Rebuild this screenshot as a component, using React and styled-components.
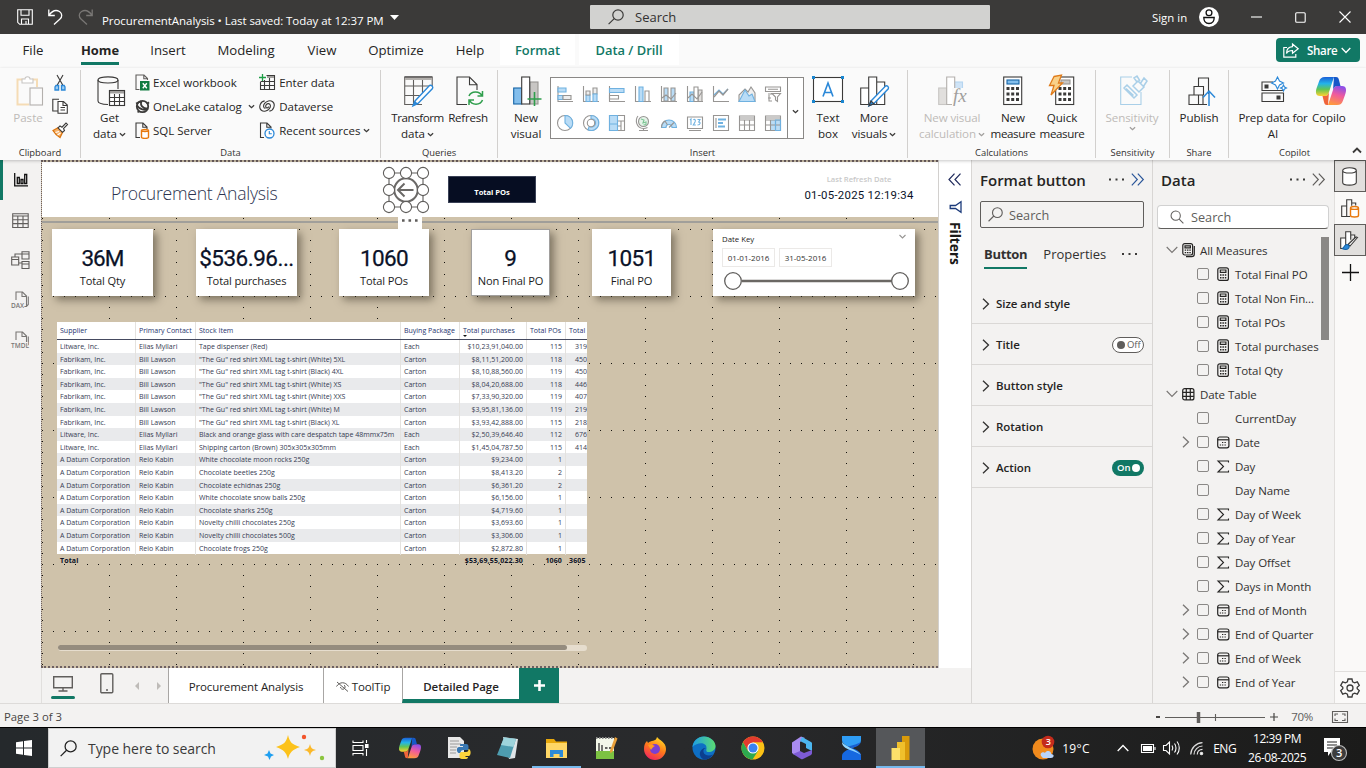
import React from 'react';
import styled, { createGlobalStyle, css } from 'styled-components';

const UI = '"Open Sans", "Noto Sans", sans-serif';
const DIN = 'Roboto, "Open Sans", sans-serif';
const teal = '#117865';

const Global = createGlobalStyle`
  * { box-sizing: border-box; }
  html, body { margin: 0; padding: 0; }
  body { font-family: ${UI}; background: #f3f2f1; color: #252423; overflow: hidden; }
  svg { display: block; flex: none; }
`;

const Window = styled.div`
  width: 1366px; height: 768px; display: flex; flex-direction: column; overflow: hidden;
`;

const Glyph = styled.svg.attrs({ fill: 'none' })`
  stroke: ${p => p.$c || '#3b3a39'};
  stroke-width: ${p => p.$sw || 1.1};
  overflow: visible;
`;
const Ico = ({ w = 16, h = w, c, sw, children, vb }) => (
  <Glyph width={w} height={h} viewBox={vb || `0 0 ${w} ${h}`} $c={c} $sw={sw}>{children}</Glyph>
);

/* ---------- title bar ---------- */
const TitleBar = styled.header`
  height: 34px; flex: none; background: #3b3a39; color: #fff; display: flex; align-items: center; padding-left: 17px;
`;
const QuickActions = styled.div`display: flex; gap: 15px; width: 85px; align-items: center;`;
const DocName = styled.div`
  font-size: 11.5px; width: 488px; display: flex; align-items: center; white-space: pre; padding-top: 6px;
  letter-spacing: -0.06px;
  svg { margin: -5px 0 0 6px; }
`;
const TopSearch = styled.div`
  width: 400px; height: 24px; background: #d2d2d0; color: #323130; display: flex; align-items: center; gap: 11px;
  padding-left: 18px; font-size: 13px; border-radius: 1px;
`;
const SignIn = styled.div`margin-left: 162px; font-size: 11.4px; width: 47px;`;
const WinButtons = styled.div`display: flex; gap: 33px; margin-left: 32px; align-items: center;`;

/* ---------- ribbon ---------- */
const TabStrip = styled.nav`
  height: 34px; flex: none; background: #fafafa; display: flex; align-items: stretch; position: relative; padding-left: 10px;
`;
const RibbonTab = styled.div`
  width: ${p => p.$w}px; margin-left: ${p => p.$ml || 0}px; font-size: 13.2px; display: flex; justify-content: center;
  align-items: center; white-space: nowrap; position: relative; padding-bottom: 2px;
  ${p => p.$context && css`background: #fff; color: ${teal}; font-weight: 600; font-size: 12.9px; height: 31px; padding-bottom: 0;`}
  ${p => p.$active && css`
    font-weight: 700; font-size: 12.9px;
    &::after { content: ''; position: absolute; left: 9px; right: 9px; bottom: 3px; height: 3px; background: ${teal}; }
  `}
`;
const ShareButton = styled.button`
  margin: 4px 6px 0 auto; width: 84px; height: 24px; border: 0; border-radius: 4px; background: ${teal}; color: #fff;
  font: 600 11.6px ${UI}; letter-spacing: -0.35px; display: flex; align-items: center; padding: 0 0 0 7px; gap: 8px;
  svg:last-child { margin-left: -4px; }
`;
const Ribbon = styled.div`
  height: 92px; flex: none; background: #fafafa; display: flex; padding-top: 2px; position: relative; z-index: 3;
  box-shadow: 0 1px 3px rgba(0,0,0,.22);
`;
const Group = styled.section`
  width: ${p => p.$w}px; height: 88px; border-right: 1px solid ${p => (p.$last ? 'transparent' : '#d2d0ce')};
  display: flex; flex-direction: column; flex: none;
`;
const GroupBody = styled.div`display: flex; flex: none; height: 76px; padding-left: ${p => p.$pl || 0}px;`;
const GroupLabel = styled.div`
  font-size: 9.4px; line-height: 14px; flex: none; text-align: center; color: #323130;
`;
const Big = styled.div`
  width: ${p => p.$w}px; margin-left: ${p => p.$ml || 0}px; flex: none; display: flex; flex-direction: column; align-items: center;
  font-size: 11.6px; line-height: 16px; white-space: nowrap; text-align: center; color: ${p => (p.$dim ? '#bebbb8' : '#252423')};
  ${p => p.$clip && 'overflow: hidden; align-items: flex-start;'}
`;
const BigIcon = styled.div`height: 40px; padding-top: 6px; padding-left: ${p => p.$shift || 0}px;`;
const Line = styled.div`display: flex; align-items: center; justify-content: center; gap: 2px; letter-spacing: ${p => p.$ls || 0}px;`;
const SmallCol = styled.div`width: ${p => p.$w}px; display: flex; flex-direction: column;`;
const Small = styled.div`
  height: 24px; display: flex; align-items: center; font-size: 11.5px; white-space: nowrap; gap: 3px;
  justify-content: ${p => (p.$center ? 'center' : 'flex-start')};
`;
const SmallIcon = styled.span`width: 16px; display: flex; justify-content: center; flex: none;`;
const Gallery = styled.div`
  width: 254px; height: 62px; margin-top: 7px; border: 1px solid #8a8886; background: #fff; display: flex;
`;
const GalleryGrid = styled.div`
  width: 236px; display: grid; grid-template-columns: repeat(9, 26px); grid-auto-rows: 29px; padding: 1px; align-content: start;
  > svg { margin: 7px 0 0 5px; }
`;
const GalleryMore = styled.div`flex: 1; border-left: 1px solid #8a8886; display: flex; align-items: center; justify-content: center; padding-top: 6px;`;
const Collapse = styled.div`position: absolute; right: 4px; bottom: 6px;`;

const Caret = ({ c = '#3b3a39', w = 7 }) => <Ico w={w} h={5} vb="0 0 7 5" c={c} sw={1.3}><path d="M.9 1.200l2.600 2.500L6.100 1.200" /></Ico>;

const IconSearch = ({ c = '#3b3a39', s = 15, flip }) => (
  <Ico w={s} vb="0 0 16 16" c={c} sw={1.2}>
    {flip ? <><circle cx="6.5" cy="6.5" r="5.3" /><path d="M10.5 10.5L15.3 15.3" /></> : <><circle cx="10" cy="6" r="5.2" /><path d="M6.2 9.6L.6 15.2" /></>}
  </Ico>
);
const IconPaste = () => (
  <Ico w={28} h={31} c="#c8c6c4"><path d="M8 3.5H1.5v25H13" stroke="#f5dcb5" strokeWidth="2" /><path d="M16 3.5h5V11" stroke="#f5dcb5" strokeWidth="2" /><path d="M6 7V3h3c0-3 5-3 5 0h3v4z" fill="#fff" /><rect x="14" y="12" width="12.5" height="17" fill="#fbfbfb" stroke="#b3b0ad" /></Ico>
);
const IconCut = () => <Ico w={12} h={17}><path d="M3 1l6 10.5M9 1L3 11.500" /><path d="M2 11.500h2.600V16H1v-3zM7.500 11.500h2.700l.8 1.500v3H7.500z" stroke="#2b88d8" fill="#9dcdf3" strokeWidth="1.3" /></Ico>;
const IconCopy = () => <Ico w={16} h={16}><path d="M6 13H.8V1.2H7" /><path d="M6 3.5h5.5L15.3 7v8.3H6zM11 3.8V7.5h4M8.5 9.5h4.5M8.5 12h4.5" fill="#fff" /></Ico>;
const IconBrush = () => <Ico w={16} h={16}><path d="M1 8.5l5-2.7 4.5 4.5L8 15.5C5.5 14 3 12 1 8.5z" fill="#f7b26a" stroke="#d9730d" strokeWidth="1.3" /><path d="M3.5 10.5l3.5-1M5.5 13l3-2" stroke="#fff" /><path d="M6 5.8L8 4l2 1.2L14 1l1.5 1.5L11.5 6.5 12.5 8.5l-2 1.8z" fill="#fff" /></Ico>;
const IconGetData = () => (
  <Ico w={28} h={30}><path d="M21 13V4c0-4.2-20-4.2-20 0v21c0 2 4 3.3 10 3.5" /><path d="M1 4c0 4 20 4 20 0" /><rect x="12.5" y="14.5" width="15" height="15" fill="#fff" /><path d="M12.5 16h15" stroke="#a19f9d" strokeWidth="3" /><path d="M12.5 21.5h15M12.5 25.5h15M17.5 18v12M22.5 18v12M12.5 14.5h15v15h-15z" /></Ico>
);
const IconExcel = () => <Ico w={15} h={17}><path d="M4.5 15.5H1V1h8l3.5 3.5V6M8.8 1v3.8h3.7" stroke="#605e5c" /><rect x="5" y="7" width="9.5" height="9.5" fill="#107c41" stroke="none" /><path d="M7.8 9.3l4 5M11.8 9.3l-4 5" stroke="#fff" strokeWidth="1.4" /></Ico>;
const IconOneLake = () => <Ico w={15} h={15} sw={1.8}><circle cx="7.5" cy="7.5" r="5.7" /><path d="M2 6.5c2.5 4 8 5.5 11 3M6.5 2c-1.7 4.2 1 7.5 6.4 7.6M1 4.5l5-2.3M12 5l2-1.7M4 12.5l-1.5.8" /></Ico>;
const IconSql = () => <Ico w={15} h={17}><path d="M5 15.5H1V1h7l4 4v2M7.8 1v4.2H12" /><path d="M6.5 8.5v6.8c0 1.4 7 1.4 7 0V8.5c0-1.4-7-1.4-7 0c0 1.3 7 1.3 7 0" fill="#fff" stroke="#e8780c" strokeWidth="1.4" /></Ico>;
const IconEnter = () => <Ico w={16} h={17}><path d="M7.5 1.5H15.5v14H1.5V8M1.5 7.5h14M1.5 11.5h14M5.5 6v9.5M10.5 4v11.5" /><path d="M8 3h7" stroke="#a19f9d" strokeWidth="2" /><path d="M3.5 0v7M0 3.5h7" stroke="#1e9e45" strokeWidth="1.3" /></Ico>;
const IconDataverse = () => <Ico w={16} h={14} vb="0 0 17 14" sw={1.2}><path d="M6 1.500C1.500 2-1 8.500 2.500 11.500c2.800 2.300 6.500.5 8.500-1.800 1.800-2 1.500-5-.8-5.200-2-.2-3.600 1.900-3 3.600.6 1.600 3 1 3-.7" /><path d="M11 12.500c4.500-.5 7-7 3.500-10-2.800-2.300-6.500-.5-8.500 1.800-1.800 2-1.500 5 .8 5.200" /></Ico>;
const IconRecent = () => <Ico w={16} h={17}><path d="M5 15.500H1.500V1h6.500l4 4v1.500M7.800 1v4.200H12" /><circle cx="10.500" cy="11.500" r="4.500" fill="#fff" stroke="#2b88d8" strokeWidth="1.300" /><path d="M10.300 9v2.700h2.500" stroke="#2b88d8" /></Ico>;
const IconTransform = () => <Ico w={30} h={31}><path d="M18 28.500H.7V1h27.500v9M.7 10h25M.7 19.500h17M9.500 4v24.500M18.500 4v13" stroke="#605e5c" /><path d="M1 2.500h27" stroke="#b3b0ad" strokeWidth="3" /><path d="M.7 1h27.500" /><path d="M11 25L25.500 9.500c2-1 4 1.300 3 3L14 27.500l-5 2.300z" fill="#fff" stroke="#2b88d8" strokeWidth="1.400" /><path d="M11 25l3 2.700-5 2z" fill="#2b88d8" stroke="none" /></Ico>;
const IconRefresh = () => <Ico w={28} h={31}><path d="M11 28.500H1V1h12.500l7.500 7.500V14M13.500 1v7.700H21" /><g stroke="#2f9e4c" strokeWidth="1.500"><path d="M13 20c2-5.500 11-5.500 13 0M26.500 15v5h-5M26.500 24c-2 5.500-11 5.500-13 0M13 29v-5h5" /></g></Ico>;
const IconNewVisual = () => <Ico w={29} h={31}><rect x="17" y="6" width="8" height="22" fill="#c8c6c4" stroke="#979593" /><rect x=".7" y="12" width="8" height="16" fill="#83beec" stroke="#1664a7" /><rect x="8.700" y="1" width="8" height="27" fill="#fff" /><path d="M21.500 16v14M14.500 23h14" stroke="#2f9e4c" strokeWidth="1.600" /></Ico>;
const IconTextBox = () => <Ico w={32} h={28}><rect x="1.500" y="1.500" width="29" height="24" fill="#fff" /><path d="M11 20.500L16 7l5 13.500M12.700 16.500h6.600" stroke="#2b88d8" strokeWidth="1.600" /><path d="M0 0h3v3H0zM29 0h3v3h-3zM0 24h3v3H0zM29 24h3v3h-3z" fill="#1a86d0" stroke="none" /></Ico>;
const IconMoreVisuals = () => <Ico w={30} h={31}><path d="M.7 12h8v16.500h-8zM8.700 1h8v27.500h-8zM16.700 6h8v22.500h-8z" fill="#fff" /><path d="M11 25L25.500 10c2-.7 3.600 1 2.800 2.800L14 27.500l-5 2.300z" fill="#fff" stroke="#2b88d8" strokeWidth="1.400" /><path d="M11 25l3 2.700-5 2z" fill="#2b88d8" /></Ico>;
const FxText = styled.text`font: italic 19px "Liberation Serif", serif; fill: #a19f9d; stroke: none;`;
const IconFx = () => <Ico w={28} h={31} c="#b3b0ad"><rect x=".7" y="12" width="8" height="16.500" fill="#e1dfdd" stroke="#c8c6c4" /><rect x="16.500" y="6" width="8" height="8" fill="#cfe4f7" stroke="#b5d5f0" /><path d="M8.700 1h8v27.500h-8z" fill="#fff" /><path d="M14 12h15v19H14z" fill="#fafafa" stroke="none" /><FxText x="15" y="26">fx</FxText></Ico>;
const CalcBody = ({ dx = 0 }) => <g transform={`translate(${dx} 0)`}><rect x=".7" y="1" width="18" height="27.500" fill="#fff" /><path d="M3.500 12.500h3M8.200 12.500h3M13 12.500h3M3.500 18h3M8.200 18h3M13 18h3M3.500 23.500h3M8.200 23.500h3M13 23.500h3" strokeWidth="3" /></g>;
const IconCalc = () => <Ico w={20} h={31}><CalcBody /><rect x="4" y="4" width="12" height="4" fill="#83beec" stroke="#1664a7" /></Ico>;
const IconQuick = () => <Ico w={26} h={31}><CalcBody dx={6} /><rect x="12" y="4" width="9" height="4" fill="#c8c6c4" stroke="#979593" /><path d="M5 .5L12.500-1 9.500 7h4L2 19l3-9.500H.5z" fill="#f9d189" stroke="#e07b1a" strokeWidth="1.300" /></Ico>;
const IconSens = () => <Ico w={28} h={31} c="#a9cfe8"><path d="M21 16v12.500H.7V1H12" /><path d="M4 12l3-3 10 10-3 3zM6 12.500l7.500 7M13 10l5-5 6 6-5 5zM17 6l-3-4 3-2 3 5M20 8l4-6 3 3-4 6" strokeWidth="1.500" /></Ico>;
const IconPublish = () => <Ico w={28} h={31}><path d="M1 19h9.500v9.500H1zM6 19v-8.500h9.500V19M10.500 10.500V2h10v16M10.500 28.500H15V19h-4.500M15 28.500h4" /><path d="M21 30V15.500M15 21.500l6-6.500 6 6.500" stroke="#2b88d8" strokeWidth="1.500" /></Ico>;
const IconPrep = () => <Ico w={26} h={27}><path d="M12 6H1v8.500h21.500M1 17h21.500v8.500H1zM1 6h10" /><path d="M3.500 8.500h4v4h-4zM15.500 19.500h4v4h-4z" fill="#3b3a39" stroke="none" /><path d="M16.500 1l2 4 4 2-4 2-2 4-2-4-4-2 4-2zM22.500 9l1 2 2 1-2 1-1 2-1-2-2-1 2-1z" stroke="#2b88d8" fill="#fff" /></Ico>;
const IconCopilot = ({ s = 30, id = 'cp' }) => (
  <Ico w={s} vb="0 0 30 30" c="none">
    <defs>
      <linearGradient id={id + 'a'} x1="0" y1="0" x2="0" y2="1"><stop offset="0" stopColor="#1b5fd8" /><stop offset=".35" stopColor="#23b4ea" /><stop offset=".65" stopColor="#62c554" /><stop offset="1" stopColor="#ffd02f" /></linearGradient>
      <linearGradient id={id + 'b'} x1=".6" y1="0" x2=".3" y2="1"><stop offset="0" stopColor="#8d4fe8" /><stop offset=".45" stopColor="#f05a9d" /><stop offset="1" stopColor="#ff9a3d" /></linearGradient>
    </defs>
    <path d="M21 10h5c5 0 4.500 5 3 9l-2 5.500c-1 3-2.500 4.500-6 4.500H12l5-15c1-3 2-4 4-4z" fill={`url(#${id}b)`} />
    <path d="M9 20H4c-5 0-4.500-5-3-9L3 5.500C4 2.500 5.500 1 9 1h9l-5 15c-1 3-2 4-4 4z" fill={`url(#${id}a)`} />
    <path d="M9 1h11c2 0 2.500 1 3 3l1.500 6H21c-2 0-3 1-4 4L18 1z" fill="#1658c8" />
    <path d="M21 29H11c-2 0-2.500-1-3-3l-1.500-6H9c2 0 3-1 4-4l-1 13z" fill="#f0643a" />
  </Ico>
);

const gs = '#979593';
const blue = '#b9dcf6';
const galleryIcons = [
  <Ico key="a" c={gs}><path d="M1 0v15.500h15" /><path d="M1 2h8v4H1z" fill={blue} stroke="#6fb1e0" /><path d="M1 9.500h5v4H1z" fill={blue} stroke="#6fb1e0" /><path d="M6 9.500h8v4H6z" fill="#eee" /></Ico>,
  <Ico key="b" c={gs}><path d="M.5 0v15.500H16" /><path d="M3 9h4v6.500H3z" fill={blue} stroke="#6fb1e0" /><path d="M3 5h4v4H3zM10 2h4v6h-4z" fill="#eee" /><path d="M10 8h4v7.500h-4z" fill={blue} stroke="#6fb1e0" /></Ico>,
  <Ico key="c" c={gs}><path d="M.5 0v15.500H16" /><path d="M.5 2.500h14.500v4H.5z" fill={blue} stroke="#6fb1e0" /><path d="M.5 9.500h9v3.500h-9z" /></Ico>,
  <Ico key="d" c={gs}><path d="M.5 0v15.500H16" /><path d="M4 1h4v14.500H4z" fill={blue} stroke="#6fb1e0" /><path d="M10 5h4v10.500h-4z" /></Ico>,
  <Ico key="e" c={gs}><path d="M.5 0v15.500H16" /><path d="M3 2h4v13H3zM10 2h4v13h-4z" fill={blue} /><path d="M1 12l4-3 5 4 5-6" /></Ico>,
  <Ico key="f" c={gs}><path d="M.5 0v15.500H16" /><path d="M3 6h4v9.500H3z" fill={blue} stroke="#6fb1e0" /><path d="M11 4h4v11.500h-4z" fill="#e3e1df" /><path d="M7 1h4v14.500H7z" fill="#fff" /><path d="M1 12l4-4 5 5 5-7" /></Ico>,
  <Ico key="g" c={gs}><path d="M.5 0v15.500H16" /><path d="M1 9l5-5 4 4 5-5" stroke="#6fb1e0" /><path d="M1 11l5-6 4 4 5-6" strokeWidth="1.300" /></Ico>,
  <Ico key="h" c={gs}><path d="M0 15.500V9L6 3l3 3 3-5 4 6v8.500z" fill="#eee" /><path d="M0 15.500L6 4l4 6 3-2 3 7.500z" fill={blue} stroke="#6fb1e0" /></Ico>,
  <Ico key="i" c={gs}><path d="M7 15H4V9M.5 1h15v4.500H.5zM3 3.300h10M3 8h5M3 12h3M7 7.500h8.500L12.500 11v4.500l-2-1.500v-3z" fill="none" /></Ico>,
  <Ico key="j" c={gs}><circle cx="8" cy="8" r="7.500" /><path d="M8 .5a7.500 7.500 0 0 1 5.500 12.800L8 8z" fill={blue} stroke="#6fb1e0" /></Ico>,
  <Ico key="k" c={gs}><circle cx="8" cy="8" r="7.500" /><path d="M8 .5a7.500 7.500 0 1 1-3 14.200l1.300-3.500A4 4 0 1 0 8 4z" fill={blue} stroke="#6fb1e0" /><circle cx="8" cy="8" r="3.700" fill="#fff" /></Ico>,
  <Ico key="l" c={gs}><path d="M.5.5h15v15H.5zM9 6h6.500M12 6v9.500M9 11h3" /><path d="M.5.5h8v15h-8zM.5 9h8" fill={blue} stroke="#6fb1e0" /></Ico>,
  <Ico key="m" c={gs}><circle cx="8.500" cy="6.500" r="5" fill="#e4f3e8" /><path d="M6 4l3 1-1 3 3-1v2.500l-2.500.5" stroke="#7cc594" /><path d="M3 1C0 5 1 13 8.500 13.500c2 0 3-.5 4-1M8.500 13.500V15.500M4 15.500h9" /></Ico>,
  <Ico key="n" c={gs}><path d="M.5 12.500a7.500 7.500 0 0 1 15 0h-4.500a3 3 0 0 0-6 0z" fill={blue} stroke="#6fb1e0" /><path d="M.5 12.500A7.500 7.500 0 0 1 4 6l2.500 4M8 12.500l5-5" /></Ico>,
  <Ico key="o" c={gs}><path d="M.5 2h15v11.500H.5zM2 15.500h12" /><path d="M3 5l1-1v6M6.500 5c1-1.500 2.500 0 1.500 2l-1.700 3h2.500M10.500 4.500h2.500L11.700 7c2 0 2 3-1.200 3" stroke="#6fb1e0" /></Ico>,
  <Ico key="p" c={gs}><path d="M.5.5h15v15H.5zM3 3v10" /><path d="M5 4.500h8M5 8h5M5 11.500h7" stroke="#6fb1e0" strokeWidth="1.800" /></Ico>,
  <Ico key="q" c={gs}><path d="M.5 1h15v14.500H.5zM.5 5h15M.5 10h15M5.500 5v10.500M10.500 5v10.500M.5 3h15" /></Ico>,
  <Ico key="r" c={gs}><path d="M6 5h9.500v10.500H6z" fill={blue} stroke="none" /><path d="M.5 1h15v14.500H.5zM.5 5h15M.5 10h15M5.500 5v10.500M10.500 5v10.500M.5 3h15" /><path d="M10.500 5v10.500h5V5z" stroke="#6fb1e0" /></Ico>,
];

function RibbonBar() {
  return (
    <Ribbon>
      <Group $w={81}>
        <GroupBody $pl={6}>
          <Big $w={44} $dim><BigIcon $shift={4}><IconPaste /></BigIcon><Line>Paste</Line></Big>
          <SmallCol $w={20}>
            <Small $center><IconCut /></Small>
            <Small $center><IconCopy /></Small>
            <Small $center><IconBrush /></Small>
          </SmallCol>
        </GroupBody>
        <GroupLabel>Clipboard</GroupLabel>
      </Group>
      <Group $w={300}>
        <GroupBody $pl={4}>
          <Big $w={49}><BigIcon $shift={3}><IconGetData /></BigIcon><Line>Get</Line><Line>data <Caret /></Line></Big>
          <SmallCol $w={125}>
            <Small><SmallIcon><IconExcel /></SmallIcon>Excel workbook</Small>
            <Small><SmallIcon><IconOneLake /></SmallIcon>OneLake catalog&nbsp;<Caret /></Small>
            <Small><SmallIcon><IconSql /></SmallIcon>SQL Server</Small>
          </SmallCol>
          <SmallCol $w={118}>
            <Small><SmallIcon><IconEnter /></SmallIcon>&#8202;Enter data</Small>
            <Small><SmallIcon><IconDataverse /></SmallIcon>&#8202;Dataverse</Small>
            <Small><SmallIcon><IconRecent /></SmallIcon>&#8202;Recent sources <Caret /></Small>
          </SmallCol>
        </GroupBody>
        <GroupLabel>Data</GroupLabel>
      </Group>
      <Group $w={117}>
        <GroupBody $pl={9}>
          <Big $w={55}><BigIcon $shift={2}><IconTransform /></BigIcon><Line $ls={-0.45}>Transform</Line><Line>data<Caret /></Line></Big>
          <Big $w={46}><BigIcon $shift={4}><IconRefresh /></BigIcon><Line $ls={-0.25}>Refresh</Line></Big>
        </GroupBody>
        <GroupLabel>Queries</GroupLabel>
      </Group>
      <Group $w={410}>
        <GroupBody $pl={4}>
          <Big $w={48}><BigIcon $shift={2}><IconNewVisual /></BigIcon><Line>New</Line><Line>visual</Line></Big>
          <Gallery>
            <GalleryGrid>{galleryIcons}</GalleryGrid>
            <GalleryMore><Caret /></GalleryMore>
          </Gallery>
          <Big $w={48}><BigIcon><IconTextBox /></BigIcon><Line>Text</Line><Line>box</Line></Big>
          <Big $w={42} $ml={1}><BigIcon $shift={2}><IconMoreVisuals /></BigIcon><Line>More</Line><Line $ls={-0.1}>visuals<Caret /></Line></Big>
        </GroupBody>
        <GroupLabel>Insert</GroupLabel>
      </Group>
      <Group $w={188}>
        <GroupBody $pl={9}>
          <Big $w={70} $dim><BigIcon><IconFx /></BigIcon><Line $ls={-0.15}>New visual</Line><Line $ls={-0.1}>calculation <Caret c="#a19f9d" /></Line></Big>
          <Big $w={48} $ml={2}><BigIcon><IconCalc /></BigIcon><Line>New</Line><Line $ls={-0.4}>measure</Line></Big>
          <Big $w={48} $ml={1}><BigIcon><IconQuick /></BigIcon><Line>Quick</Line><Line $ls={-0.4}>measure</Line></Big>
        </GroupBody>
        <GroupLabel>Calculations</GroupLabel>
      </Group>
      <Group $w={74}>
        <GroupBody>
          <Big $w={72} $dim><BigIcon $shift={3}><IconSens /></BigIcon><Line $ls={-0.1}>Sensitivity</Line><Line><Caret c="#a19f9d" /></Line></Big>
        </GroupBody>
        <GroupLabel>Sensitivity</GroupLabel>
      </Group>
      <Group $w={59}>
        <GroupBody>
          <Big $w={58}><BigIcon $shift={5}><IconPublish /></BigIcon><Line $ls={-0.1}>Publish</Line></Big>
        </GroupBody>
        <GroupLabel>Share</GroupLabel>
      </Group>
      <Group $w={132} $last>
        <GroupBody $pl={8}>
          <Big $w={72}><BigIcon $shift={2}><IconPrep /></BigIcon><Line $ls={-0.15}>Prep data for</Line><Line>AI</Line></Big>
          <Big $w={36} $ml={3} $clip><BigIcon $shift={4}><IconCopilot /></BigIcon><Line $ls={-0.1}>Copilo</Line></Big>
        </GroupBody>
        <GroupLabel>Copilot</GroupLabel>
      </Group>
      <Collapse><Ico w={10} h={7} sw={1.800}><path d="M1 5.500L5 1.500l4 4" /></Ico></Collapse>
    </Ribbon>
  );
}

/* ---------- workspace ---------- */
const Workspace = styled.main`height: 543px; flex: none; display: flex;`;
const LeftRail = styled.aside`width: 41px; background: #f3f2f1; display: flex; flex-direction: column; flex: none;`;
const RailItem = styled.div`
  height: 40px; display: flex; align-items: center; justify-content: center;
  box-shadow: inset 3px 0 0 ${p => (p.$active ? teal : 'transparent')};
`;
const Middle = styled.div`width: 930px; display: flex; flex-direction: column; flex: none;`;
const ReportRow = styled.div`height: 508px; display: flex;`;
const Canvas = styled.div`
  width: 897px; height: 508px; background: #cfc2aa; position: relative; overflow: hidden; flex: none;
  &::after { content: ''; position: absolute; inset: 0; border: 2px dotted #6d6062; border-left-width: 1px; border-right: 0; pointer-events: none; }
`;
const GridDots = styled.svg`position: absolute; inset: 0;`;
const Layer = styled.div`position: relative; padding: 2px 0 0 1px;`;
const Banner = styled.div`height: 55px; background: #fff; display: flex; padding-left: 69px;`;
const ReportTitle = styled.h1`
  margin: 0; padding-top: 17px; width: 272px; font-size: 17.600px; line-height: 28px; font-weight: 300; color: #2b3350; letter-spacing: -0.25px; white-space: nowrap;
`;
const BackButton = styled.div`width: 65px; padding-top: 5px; position: relative;`;
const MoreBadge = styled.div`
  position: absolute; left: 15px; top: 55px; width: 24px; height: 12px; background: #fff; z-index: 2; padding: 2px 0 0 4px;
`;
const NavyButton = styled.div`
  width: 88px; height: 27px; margin-top: 14px; background: #060d22; border: 1px solid #3a4156; color: #fff; font-size: 7.600px; font-weight: 700;
  display: flex; align-items: center; justify-content: center; padding-top: 4px; letter-spacing: -0.050px;
`;
const Refreshed = styled.div`margin-left: auto; margin-right: 23px; width: 112px; padding-top: 12px; text-align: center;`;
const RefreshedLabel = styled.div`font-size: 7.600px; line-height: 11px; font-weight: 600; color: #c9c9c9;`;
const RefreshedValue = styled.div`font: 400 11.400px/20px ${DIN}; color: #0b1228; letter-spacing: 0.260px; white-space: nowrap;`;
const Rule = styled.div`height: 2px; background: #a19f9a; margin-top: 4px;`;
const Cards = styled.div`display: flex; padding: 6px 0 0 10px;`;
const shadow = '4px 4px 8px rgba(60, 52, 40, .55)';
const KpiCard = styled.div`
  width: ${p => p.$w}px; margin-right: ${p => p.$gap}px; height: 67px; background: #fff; box-shadow: ${shadow}; text-align: center; flex: none;
  padding-top: 16px; border: 1px solid ${p => (p.$outline ? '#a19f9d' : '#fff')};
`;
const KpiValue = styled.div`font: 400 22.500px/24px ${DIN}; color: #0b1228; -webkit-text-stroke: 0.25px #0b1228; letter-spacing: ${p => p.$ls}px; white-space: nowrap;`;
const KpiLabel = styled.div`font-size: 11.100px; line-height: 16px; margin-top: 3px; color: #1c1c1c; white-space: nowrap; letter-spacing: -0.140px;`;
const Slicer = styled.div`width: 202px; height: 67px; background: #fff; box-shadow: ${shadow}; padding: 4px 9px 0;`;
const SlicerHead = styled.div`display: flex; justify-content: space-between; font-size: 7.800px; line-height: 12px; height: 15px;`;
const DateBoxes = styled.div`display: flex; gap: 4px;`;
const DateBox = styled.div`width: 53px; height: 19px; border: 1px solid #ebe9e7; font-size: 8px; line-height: 17px; text-align: center; color: #333;`;
const SliderSvg = styled.svg`margin: 4px 0 0 1px;`;

const TableBox = styled.div`width: 530px; margin: 26px 0 0 15px; overflow: hidden;`;
const cols = '78px 60px 205px 59px 67px 39px 62px';
const Row = styled.div`
  display: grid; grid-template-columns: ${cols}; height: ${p => p.$h || 12.6}px; width: 570px;
  background: ${p => p.$bg || 'transparent'}; font-size: 7.020px; line-height: 13px; color: ${p => p.$c || '#363b52'};
  font-weight: ${p => (p.$bold ? 700 : 400)};
`;
const HeadRow = styled(Row)`
  height: 18px; border-bottom: 1px solid #454a60; line-height: 16px; background: #fff; color: #25336e; position: relative;
`;
const Cell = styled.div`
  padding: 0 3px 0 ${p => p.$pl || 3}px; white-space: nowrap; text-align: ${p => (p.$r ? 'right' : 'left')}; letter-spacing: ${p => p.$ls || 0}px;
  border-left: ${p => (p.$line ? '1px solid #e4e2df' : '0')};
`;
const SortMark = styled.div`
  position: absolute; left: 406px; top: 13px; border: 2.500px solid transparent; border-top-color: #111;
`;
const HScroll = styled.div`
  width: 529px; height: 6px; margin: 77px 0 0 16px; border-radius: 3px; background: #e6ddce;
  &::before { content: ''; display: block; width: 509px; height: 5px; border-radius: 3px; background: #958c7e; }
`;

const L = 'Litware, Inc.', F = 'Fabrikam, Inc.', A = 'A Datum Corporation';
const E = 'Elias Myllari', B = 'Bill Lawson', R = 'Reio Kabin';
const data = [
  [L, E, 'Tape dispenser (Red)', 'Each', '$10,23,91,040.00', '115', '319'],
  [F, B, '"The Gu" red shirt XML tag t-shirt (White) 5XL', 'Carton', '$8,11,51,200.00', '118', '450'],
  [F, B, '"The Gu" red shirt XML tag t-shirt (Black) 4XL', 'Carton', '$8,10,88,560.00', '119', '450'],
  [F, B, '"The Gu" red shirt XML tag t-shirt (White) XS', 'Carton', '$8,04,20,688.00', '118', '446'],
  [F, B, '"The Gu" red shirt XML tag t-shirt (White) XXS', 'Carton', '$7,33,90,320.00', '119', '407'],
  [F, B, '"The Gu" red shirt XML tag t-shirt (White) M', 'Carton', '$3,95,81,136.00', '119', '219'],
  [F, B, '"The Gu" red shirt XML tag t-shirt (Black) XL', 'Carton', '$3,93,42,888.00', '115', '218'],
  [L, E, 'Black and orange glass with care despatch tape 48mmx75m', 'Each', '$2,50,39,646.40', '112', '676'],
  [L, E, 'Shipping carton (Brown) 305x305x305mm', 'Each', '$1,45,04,787.50', '115', '414'],
  [A, R, 'White chocolate moon rocks 250g', 'Carton', '$9,234.00', '1', ''],
  [A, R, 'Chocolate beetles 250g', 'Carton', '$8,413.20', '2', ''],
  [A, R, 'Chocolate echidnas 250g', 'Carton', '$6,361.20', '2', ''],
  [A, R, 'White chocolate snow balls 250g', 'Carton', '$6,156.00', '1', ''],
  [A, R, 'Chocolate sharks 250g', 'Carton', '$4,719.60', '1', ''],
  [A, R, 'Novelty chilli chocolates 250g', 'Carton', '$3,693.60', '1', ''],
  [A, R, 'Novelty chilli chocolates 500g', 'Carton', '$3,306.00', '1', ''],
  [A, R, 'Chocolate frogs 250g', 'Carton', '$2,872.80', '1', ''],
];
const heads = ['Supplier', 'Primary Contact', 'Stock Item', 'Buying Package', 'Total purchases', 'Total POs', 'Total'];

const offsets = [0, 11, 22, 33, 45, 56];
const handlePts = [[6, 6], [23, 6], [40, 6], [6, 23], [40, 23], [6, 40], [23, 40], [40, 40]];

function Report() {
  return (
    <Canvas>
      <GridDots width="897" height="508">
        <defs>
          <pattern id="dots" width="67" height="67" x="1" y="2" patternUnits="userSpaceOnUse">
            {offsets.map(o => <rect key={'v' + o} x="0" y={o} width="1" height="1" fill="#14120e" />)}
            {offsets.slice(1).map(o => <rect key={'h' + o} x={o} y="0" width="1" height="1" fill="#14120e" />)}
          </pattern>
        </defs>
        <rect width="897" height="508" fill="url(#dots)" />
      </GridDots>
      <Layer>
        <Banner>
          <ReportTitle>Procurement Analysis</ReportTitle>
          <BackButton>
            <Ico w={46} c="#605e5c">
              <path d="M6 6h34v34H6z" />
              <circle cx="23" cy="23" r="11.700" fill="#fff" stroke="#6b6967" strokeWidth="2" />
              <path d="M30.500 23H15.500M21.500 16.500L15 23l6.500 6.500" stroke="#6b6967" strokeWidth="2" />
              {handlePts.map(([x, y]) => <circle key={`${x}-${y}`} cx={x} cy={y} r="5.600" fill="#fff" />)}
            </Ico>
            <MoreBadge><Ico w={16} h={3} c="none"><path d="M0 .2h2.600v2.600H0zM6.500.2h2.600v2.600H6.500zM13 .2h2.600v2.600H13z" fill="#605e5c" /></Ico></MoreBadge>
          </BackButton>
          <NavyButton>Total POs</NavyButton>
          <Refreshed>
            <RefreshedLabel>Last Refresh Date</RefreshedLabel>
            <RefreshedValue>01-05-2025 12:19:34</RefreshedValue>
          </Refreshed>
        </Banner>
        <Rule />
        <Cards>
          <KpiCard $w={101} $gap={43}><KpiValue $ls={-0.9}>36M</KpiValue><KpiLabel>Total Qty</KpiLabel></KpiCard>
          <KpiCard $w={101} $gap={42}><KpiValue $ls={-0.5}>$536.96...</KpiValue><KpiLabel>Total purchases</KpiLabel></KpiCard>
          <KpiCard $w={90} $gap={42}><KpiValue $ls={-0.7}>1060</KpiValue><KpiLabel>Total POs</KpiLabel></KpiCard>
          <KpiCard $w={79} $gap={42} $outline><KpiValue $ls={0}>9</KpiValue><KpiLabel>Non Final PO</KpiLabel></KpiCard>
          <KpiCard $w={79} $gap={42}><KpiValue $ls={-0.7}>1051</KpiValue><KpiLabel>Final PO</KpiLabel></KpiCard>
          <Slicer>
            <SlicerHead>Date Key<Ico w={7} h={8} c="#979593"><path d="M.5 2l3 3 3-3" /></Ico></SlicerHead>
            <DateBoxes><DateBox>01-01-2016</DateBox><DateBox>31-05-2016</DateBox></DateBoxes>
            <SliderSvg width="186" height="20">
              <path d="M19 10h150" stroke="#6b6864" strokeWidth="2.500" />
              <circle cx="10" cy="10" r="8.300" fill="#fff" stroke="#605e5c" strokeWidth="1.300" />
              <circle cx="177" cy="10" r="8.300" fill="#fff" stroke="#605e5c" strokeWidth="1.300" />
            </SliderSvg>
          </Slicer>
        </Cards>
        <TableBox>
          <HeadRow>
            {heads.map((h, i) => <Cell key={h + i} $line={i > 0}>{h}</Cell>)}
            <SortMark />
          </HeadRow>
          {data.map((r, n) => (
            <Row key={n} $bg={n % 2 ? '#e9eaec' : '#fff'}>
              {r.map((v, i) => <Cell key={i} $line={i > 0} $r={i === 4 || i === 5} $pl={i === 6 ? 9 : 3}>{v}</Cell>)}
            </Row>
          ))}
          <Row $bold $c="#0d1226" $h={14}>
            {['Total', '', '', '', '$53,69,55,022.30', '1060', '3605'].map((v, i) => <Cell key={i} $r={i === 4 || i === 5} $pl={i === 6 ? 4 : 3} $ls={0.13}>{v}</Cell>)}
          </Row>
        </TableBox>
        <HScroll />
      </Layer>
    </Canvas>
  );
}

const FiltersPane = styled.div`
  width: 33px; background: #fff; border-left: 1px solid #d2d0ce; display: flex; flex-direction: column; align-items: center; padding-top: 13px; padding-right: 1px;
`;
const FunnelSlot = styled.div`margin-top: 15px; padding-left: 2px;`;
const VerticalLabel = styled.div`writing-mode: vertical-rl; font-weight: 700; font-size: 13.800px; line-height: 16px; margin-top: 9px; color: #1b1a19; letter-spacing: -0.050px;`;

const PageTabs = styled.div`height: 35px; display: flex; background: #f3f2f1; border-left: 1px solid #e1dfdd;`;
const ViewToggle = styled.div`
  width: ${p => p.$w}px; height: 31px; display: flex; align-items: center; justify-content: center; position: relative;
  ${p => p.$active && css`&::after { content: ''; position: absolute; left: 9px; right: 8px; bottom: 0; height: 3px; background: ${teal}; border-radius: 2px; }`}
`;
const PageTab = styled.div`
  width: ${p => p.$w}px; background: #fff; border-left: 1px solid #a8a6a4; font-size: 11.500px; display: flex; align-items: center; justify-content: center; gap: 3px;
  padding-top: 2px; letter-spacing: -0.100px; white-space: nowrap;
  ${p => p.$active && css`font-weight: 600; font-size: 11.500px; letter-spacing: -0.050px; border-bottom: 4px solid ${teal}; padding-top: 6px;`}
`;
const AddPage = styled.div`width: 40px; background: ${teal}; display: flex; align-items: center; justify-content: center; padding-bottom: 1px;`;

const Pane = styled.section`
  width: ${p => p.$w}px; background: #f3f2f1; border-left: 1px solid #d8d6d4; flex: none; display: flex; flex-direction: column; position: relative;
`;
const PaneHead = styled.div`
  height: 39px; display: flex; align-items: center; padding: 0 ${p => p.$pr || 8}px 0 8px; font-size: 15px; font-weight: 600; gap: 7px;
  span { flex: 1; white-space: nowrap; }
`;
const PaneSearch = styled.div`
  margin: ${p => (p.$data ? '6px 5px 0 4px' : '2px 8px 0 8px')}; height: ${p => (p.$data ? 24 : 27)}px;
  border: 1px solid ${p => (p.$data ? '#d1d1d1' : '#605e5c')}; border-bottom-color: #605e5c; border-radius: ${p => (p.$data ? 4 : 2)}px;
  background: ${p => (p.$data ? '#fff' : 'transparent')}; display: flex; align-items: center; gap: ${p => (p.$data ? 7 : 6)}px;
  padding-left: ${p => (p.$data ? 12 : 7)}px; font-size: 12.700px; color: #605e5c;
`;
const FormatTabs = styled.div`display: flex; height: 55px; padding: 15px 0 0 12px; font-size: 13px; gap: 16px; color: #323130;`;
const FormatTab = styled.div`
  height: 26px; line-height: 22px; ${p => p.$active && css`font-weight: 700; border-bottom: 2px solid ${teal}; letter-spacing: -0.300px;`}
`;
const Section = styled.div`
  height: 41px; border-bottom: 1px solid #dad8d6; display: flex; align-items: center; padding: 1px 8px 0 10px; font-size: 11.500px; font-weight: 600; gap: 6px; letter-spacing: -0.060px;
  > span { flex: 1; }
`;
const Toggle = styled.div`
  width: 32px; height: 16px; border-radius: 8px; display: flex; align-items: center; font-size: 9.500px; font-weight: ${p => (p.$on ? 600 : 400)}; gap: 2px;
  ${p => (p.$on ? css`background: ${teal}; color: #fff; padding-left: 5px;` : css`background: #fff; border: 1px solid #605e5c; color: #605e5c; padding-left: 4px; flex-direction: row-reverse; justify-content: flex-end;`)}
  &::after { content: ''; width: 8px; height: 8px; border-radius: 50%; background: ${p => (p.$on ? '#fff' : '#605e5c')}; }
`;
const Tree = styled.div`padding-top: 9px; display: flex; flex-direction: column;`;
const TreeRow = styled.div`
  height: 24px; display: flex; align-items: center; font-size: 11.500px; white-space: nowrap; padding-left: ${p => (p.$child ? 29 : 13)}px; color: #323130; letter-spacing: -0.080px;
`;
const Slot = styled.div`width: ${p => p.$w}px; display: flex; flex: none;`;
const Check = styled.div`width: 12px; height: 12px; border: 1px solid #8a8886; border-radius: 2px; margin-right: 8px; margin-left: 1px; flex: none;`;
const TreeScroll = styled.div`position: absolute; right: 5px; top: 77px; width: 8px; height: 103px; background: #8a8886;`;

const Dots = () => <Ico w={15} h={3} c="none"><path d="M0 .5h2v2H0zM6.500.5h2v2h-2zM13 .5h2v2h-2z" fill="#3b3a39" /></Ico>;
const DoubleChev = ({ left, c = '#605e5c' }) => <Ico w={13} h={13} c={c} sw={1.200}>{left ? <path d="M6.500.7L1 6.500l5.500 5.800M12.500.7L7 6.500l5.500 5.800" /> : <path d="M.8.7l5.500 5.800L.8 12.300M6.800.7l5.500 5.800-5.500 5.800" />}</Ico>;
const Chev = ({ down, c = '#605e5c' }) => down
  ? <Ico w={12} h={8} c={c}><path d="M.7 1l5.300 5.500L11.300 1" /></Ico>
  : <Ico w={8} h={12} c={c} sw={1.300}><path d="M1 .7L6.500 6 1 11.300" /></Ico>;
const MeasureIcon = () => <Ico w={13} h={14} c="#252423" sw={1.200}><rect x=".8" y=".8" width="10.600" height="12.600" rx="2" /><path d="M3.300 3h5.600v2.300H3.300z" /><path d="M3 8h1.500M5.400 8h1.500M7.800 8h1.500M3 10.700h1.500M5.400 10.700h1.500M7.800 10.700h1.500" strokeWidth="1.400" /></Ico>;
const MeasureStackIcon = () => <Ico w={13} h={14} c="#252423" sw={1.200}><rect x=".8" y=".6" width="9.800" height="11.400" rx="2" /><path d="M3 2.800h5.400v2H3z" /><path d="M2.700 7.200h1.500M5 7.200h1.500M7.300 7.200h1.500M2.700 9.600h1.500M5 9.600h1.500M7.300 9.600h1.500" strokeWidth="1.300" /><path d="M12.300 3v8c0 1.600-1 2.700-2.600 2.700H4" /></Ico>;
const TableIcon = () => <Ico w={13} h={13} c="#252423" sw={1.200}><rect x=".7" y=".7" width="11.200" height="11.200" rx="2" /><path d="M.7 4.300h11.200M.7 8.300h11.200M4.300.7v11.200M8.300.7v11.200" /></Ico>;
const DateIcon = () => <Ico w={13} h={13} c="#252423" sw={1.200}><rect x=".7" y="1" width="11.200" height="10.800" rx="2" /><path d="M.7 3.800h11.200" /><path d="M5 6.500h1.300M7.500 6.500h1.300M2.800 9h1.300M5 9h1.300M7.500 9h1.300" /></Ico>;
const SigmaIcon = () => <Ico w={13} h={13} c="#252423" sw={1.100}><path d="M11.500 2.500V1H1l5.500 5.500L1 12h10.500v-1.500" /></Ico>;

const measures = ['Total Final PO', 'Total Non Fin...', 'Total POs', 'Total purchases', 'Total Qty'];
const fields = [['CurrentDay'], ['Date', 'd'], ['Day', 's'], ['Day Name'], ['Day of Week', 's'], ['Day of Year', 's'], ['Day Offset', 's'], ['Days in Month', 's'], ['End of Month', 'd'], ['End of Quarter', 'd'], ['End of Week', 'd'], ['End of Year', 'd']];

const Field = ({ name, icon, expand }) => (
  <TreeRow $child>
    <Slot $w={14}>{expand && <Chev c="#797775" />}</Slot>
    <Check />
    <Slot $w={18}>{icon}</Slot>
    {name}
  </TreeRow>
);

const RightRail = styled.aside`width: 32px; background: #faf9f8; border-left: 1px solid #e1dfdd; display: flex; flex-direction: column; flex: none;`;
const RightItem = styled.div`
  height: 32px; display: flex; align-items: center; justify-content: center; flex: none; padding-right: 1px;
  ${p => p.$on && 'background: #e1dfdd; border: 1px solid #605e5c; margin-left: -1px;'}
`;
const RightGear = styled.div`margin-top: auto; height: 32px; border-top: 1px solid #e1dfdd; display: flex; align-items: center; justify-content: center; padding-right: 2px;`;

/* ---------- status and task bar ---------- */
const Status = styled.footer`
  height: 24px; flex: none; background: #f3f2f1; border-top: 1px solid #dddbd9; display: flex; align-items: center; padding: 2px 18px 0 4px; font-size: 11.300px; color: #484644;
`;
const Zoom = styled.div`margin-left: auto; display: flex; align-items: center; gap: 5px; svg:last-child { margin-left: 14px; }`;
const Pct = styled.span`font-size: 11.500px; letter-spacing: -0.300px; margin-left: 8px; color: #605e5c;`;
const Taskbar = styled.div`
  height: 41px; flex: none; border-top: 1px solid #000; background: linear-gradient(90deg, #25292c, #292a2c 50%, #1b1b1a); display: flex; align-items: stretch; color: #fff;
`;
const Start = styled.div`width: 48px; display: flex; align-items: center; justify-content: center;`;
const TaskSearch = styled.div`
  width: 288px; background: #f2f2f2; border: 1px solid #cfcfcf; color: #3a3a3a; display: flex; align-items: center; padding-left: 11px; gap: 11px; font-size: 14px;
  letter-spacing: -0.050px; svg:last-child { margin-left: auto; margin-right: 9px; }
`;
const TaskApp = styled.div`
  width: 49.100px; display: flex; align-items: center; justify-content: center; border-bottom: 2px solid ${p => (p.$run ? '#76b9ed' : 'transparent')}; padding-top: 1px;
  background: ${p => (p.$focus ? '#55575a' : 'transparent')};
`;
const Tray = styled.div`flex: 1; display: flex; align-items: center; padding-left: 107px; font-size: 12px; white-space: nowrap;`;
const TrayItem = styled.div`width: ${p => p.$w}px; flex: none; letter-spacing: ${p => (p.$wide ? 0.35 : -0.45)}px; line-height: 19px; ${p => p.$center && 'text-align: center;'}`;
const BadgeText = styled.text`font: 600 ${p => p.$s}px ${UI}; fill: #fff; stroke: none; text-anchor: middle;`;
const DaxText = styled.text`font: 600 6.500px ${UI}; fill: #797775; stroke: #f3f2f1; stroke-width: 2px; paint-order: stroke;`;

const Page = ({ children }) => <Ico w={20} h={18} c="#797775"><path d="M5 9V1h6.500l4 4v10.500H13M11 1v4.500h4.500M17.300 5.500v8l-2 2" />{children}</Ico>;

const apps = [
  <Ico key="tv" w={17} h={16} c="#fff"><path d="M1 .5v2h10v-2M1 15.500v-2h10v2M1 5.500h10v5H1zM14.500 0v3M14.500 9v7" /><path d="M13.500 4.500h2.500v3h-2.500z" fill="#fff" /></Ico>,
  <IconCopilot key="cp" s={22} id="tc" />,
  <Ico key="py" w={24} h={24} c="none"><path d="M1 1h12l4 4v17H1z" fill="#e8e8e8" /><path d="M3 5h9M3 8h11M3 11h7M3 14h6M3 17h6" stroke="#999" /><path d="M14 8h5c2 0 2.500 1 2.500 3v3h-5c-2 0-3 1-3 3h-2c-2.500-2-2-5.500.5-6h4v-1h-3c0-1.500 0-2 1-2z" fill="#3878b3" /><path d="M18 23h-3c-2 0-2.500-1-2.500-3 0-4 1-4 3.500-4h3c2 0 2.500-1 2.500-3 2.500 0 3 6 .5 7h-3.500v1h2.500c0 1.500-1 2-3 2z" fill="#ffd43b" /></Ico>,
  <Ico key="nb" w={23} h={23} c="none"><path d="M7 1l15 2-3 19-6 1z" fill="#dfe5e8" /><path d="M8 1.500l12 1.500-6 19L1 19z" fill="#4e9db0" /><path d="M8 1.500l12 1.500-2.500 8L5 9z" fill="#9ed4dc" /></Ico>,
  <Ico key="ex" w={23} h={22} c="none"><path d="M1 2h8l2 2.500h11V20H1z" fill="#e8a80c" /><path d="M1 6h21v15H1z" fill="#ffd766" /><path d="M5 20v-7h13v7h-3.500v-3h-6v3z" fill="#2d8bd8" /></Ico>,
  <Ico key="np" w={23} h={24} c="none"><path d="M1 2h18v21H1z" fill="#f3f7e9" /><path d="M1 15h18v8H1z" fill="#7cc242" /><path d="M4 7v8M7 9v6M10 12h2.500M14 12h2.500" stroke="#333" strokeWidth="1.300" /><path d="M1 2h18" stroke="#888" strokeWidth="2" strokeDasharray="1.500 1.500" /><path d="M20 1l2.500 1.500-5 13-2 2-.5-3z" fill="#e9a03a" /></Ico>,
  <Ico key="ff" w={24} h={24} c="none"><defs><linearGradient id="ff" x1=".8" y1="0" x2=".3" y2="1"><stop offset="0" stopColor="#ffe226" /><stop offset=".5" stopColor="#ff7a1a" /><stop offset="1" stopColor="#f0245f" /></linearGradient></defs><path d="M14 1c2 3 9 5 9 12a11 11 0 0 1-22 0c0-4 1-6 3-8l1 2c3-3 8-1 9-6z" fill="url(#ff)" /><circle cx="12" cy="13" r="5" fill="#7a3fd3" /><path d="M5 9c3-1 5 0 7 1-2 1-3 2-4 4z" fill="#ff9a24" /></Ico>,
  <Ico key="ed" w={24} h={24} c="none"><defs><linearGradient id="ed" x1="0" y1=".3" x2="1" y2=".3"><stop offset="0" stopColor="#1e9de3" /><stop offset="1" stopColor="#5bdc72" /></linearGradient></defs><circle cx="12" cy="12" r="11.500" fill="#0e6fc4" /><path d="M.5 11C1 5 6 .5 12 .5S23.500 5 23.500 10c0 4-3.500 6-7 6-3 0-2-2-2-4 0-6-9-6-14-1z" fill="url(#ed)" /><path d="M14.500 12c-2 0-3.500 1.500-3 4 .5 3 5 4.500 9.500 2.500-2 3-5 5-9 5-4-1-7-8 0-11.500z" fill="#0b3f8f" /></Ico>,
  <Ico key="ch" w={24} h={24} c="none"><circle cx="12" cy="12" r="11.500" fill="#fbc116" /><path d="M2 6.300a11.500 11.500 0 0 1 20 0H12L7 15z" fill="#e33b2e" /><path d="M2 6.300A11.500 11.500 0 0 0 11.500 23.500L17 15H7z" fill="#2da94f" /><circle cx="12" cy="12" r="5.600" fill="#fff" /><circle cx="12" cy="12" r="4.500" fill="#3b82f0" /></Ico>,
  <Ico key="m3" w={22} h={23} c="none"><path d="M10 .5L14 2 9 6v10l-6 2.500L1 17V6.500z" fill="#a98bf0" /><path d="M11 1l9 5c1 .5 1 1 1 2v7l-6-3V8L9 5z" fill="#4cb7f0" /><path d="M21 14v3c0 1-.5 1.500-1 2l-8 4c-1 .4-1.500.4-2 0l-8-5 7-3 4 2z" fill="#7d5bd6" /></Ico>,
  <Ico key="xo" w={21} h={24} c="none"><path d="M1 0h19v4c0 4-4 6-9 8C6 10 1 8 1 4z" fill="#2f9df5" /><path d="M1 24h19v-4c0-4-4-6-9-8-5 2-10 4-10 8z" fill="#1668e0" /><path d="M1 6c2 4 16 8 19 13-5-3-8-4-11-5-5-2-8-4-8-8z" fill="#8fd6ff" /><path d="M20 6c-1 3-4 5-9 6l-4-1.500C12 9 17 8 20 6z" fill="#1a5fd0" /></Ico>,
  <Ico key="pb" w={20} h={24} c="none"><path d="M11 0h7.500v24H11z" fill="#d99a0b" /><path d="M6 6h8v18H6z" fill="#f0c02c" /><path d="M.5 12H9v12H.5z" fill="#fbe06a" /></Ico>,
];

export default function App() {
  return (
    <Window>
      <Global />
      <TitleBar>
        <QuickActions>
          <Ico w={16} c="#fff"><path d="M.7.7h14.600v14.600H2.700l-2-2zM4 .7v5.600h8V.7M4.500 15V10h7v5M9 12v3" /></Ico>
          <Ico w={15} h={16} c="#fff" sw={1.300}><path d="M.8.5v6h6M1 6.300C4 2 8 .5 11.500 2.500c3 2 2.800 5.500.5 7.500L6 15.500" /></Ico>
          <Ico w={15} h={16} c="#797775" sw={1.300}><path d="M14.200.5v6h-6M14 6.300C11 2 7 .5 3.500 2.500.5 4.500.7 8 3 10L9 15.500" /></Ico>
        </QuickActions>
        <DocName>ProcurementAnalysis • Last saved: Today at 12:37 PM<Ico w={9} h={5} c="none"><path d="M0 0h9L4.500 5z" fill="#fff" /></Ico></DocName>
        <TopSearch><IconSearch s={16} />Search</TopSearch>
        <SignIn>Sign in</SignIn>
        <Ico w={20} h={20} c="#111" sw={1.300}><circle cx="10" cy="10" r="10" fill="#fff" stroke="none" /><circle cx="10" cy="5.700" r="2.900" /><path d="M4.800 10.500h10.400c0 3.800-2 6-5.200 6s-5.200-2.200-5.200-6z" /></Ico>
        <WinButtons>
          <Ico w={11} h={2} c="#fff"><path d="M0 1h11" /></Ico>
          <Ico w={11} c="#fff"><rect x=".7" y=".7" width="9.500" height="9.500" rx="1" /></Ico>
          <Ico w={12} c="#fff"><path d="M.5.5l11 11M11.500.5l-11 11" /></Ico>
        </WinButtons>
      </TitleBar>
      <TabStrip>
        <RibbonTab $w={46}>File</RibbonTab>
        <RibbonTab $w={56} $ml={16} $active>Home</RibbonTab>
        <RibbonTab $w={50} $ml={15}>Insert</RibbonTab>
        <RibbonTab $w={78} $ml={14}>Modeling</RibbonTab>
        <RibbonTab $w={50} $ml={12}>View</RibbonTab>
        <RibbonTab $w={74} $ml={12}>Optimize</RibbonTab>
        <RibbonTab $w={50} $ml={12}>Help</RibbonTab>
        <RibbonTab $w={75} $ml={5} $context>Format</RibbonTab>
        <RibbonTab $w={100} $ml={4} $context>Data / Drill</RibbonTab>
        <ShareButton>
          <Ico w={16} h={15} c="#fff" sw={1.200}><path d="M4 4.500H.8v9.700h12V11M9.500 1l5.700 4.700-5.700 4.500V7.500c-3 0-5 1-6 3 0-4 2-6.500 6-6.800z" /></Ico>Share<Ico w={10} h={7} c="#fff" sw={1.300}><path d="M.7 1L5 5.500 9.300 1" /></Ico>
        </ShareButton>
      </TabStrip>
      <RibbonBar />

      <Workspace>
        <LeftRail>
          <RailItem $active><Ico w={14} h={14} c="#111" sw={1.300}><path d="M.7 0v12.800H14M3.300 4.500h2v6h-2zM7 6.500h2v4H7zM10.700 1.500h2v9h-2z" /></Ico></RailItem>
          <RailItem><Ico w={17} h={15} c="#605e5c"><path d="M.7.7h15.500v13.800H.7zM.7 3h15.500M.7 6.800h15.500M.7 10.600h15.500M5.800 3v11.500M11 3v11.500" /></Ico></RailItem>
          <RailItem><Ico w={19} h={18} c="#605e5c"><path d="M.7 6h7v8h-7zM.7 8.500h7M11 .7h7V8h-7zM11 3h7M11 10.500h7v7h-7zM11 13h7M4 6V3h7M7.700 12H11" /></Ico></RailItem>
          <RailItem><Page><DaxText x="0" y="16.500">DAX</DaxText></Page></RailItem>
          <RailItem><Page><DaxText x="0" y="16.500">TMDL</DaxText></Page></RailItem>
        </LeftRail>
        <Middle>
          <ReportRow>
            <Report />
            <FiltersPane>
              <DoubleChev left c="#1f2a5c" />
              <FunnelSlot><Ico w={13} h={12} c="#1b3a7a" sw={1.300}><path d="M12 .8v10.400L6.500 7.500H1.200v-3h5.300z" /></Ico></FunnelSlot>
              <VerticalLabel>Filters</VerticalLabel>
            </FiltersPane>
          </ReportRow>
          <PageTabs>
            <ViewToggle $w={41} $active><Ico w={20} h={16} c="#605e5c" sw={1.400}><path d="M.7.7h18.600v11H.7zM10 12v3M5.500 15h9" /></Ico></ViewToggle>
            <ViewToggle $w={48}><Ico w={14} h={21} c="#605e5c" sw={1.400}><rect x=".8" y=".8" width="12" height="19" rx="1" /><path d="M6 17h2" /></Ico></ViewToggle>
            <ViewToggle $w={33}><Ico w={26} h={8} c="none"><path d="M4 0v8L0 4zM22 0v8l4-4z" fill="#bebbb8" transform="translate(0 2)" /></Ico></ViewToggle>
            <Slot $w={4} />
            <PageTab $w={155}>Procurement Analysis</PageTab>
            <PageTab $w={79}><Ico w={13} h={11} c="#605e5c" sw={1}><path d="M.5 5.500c3-5 9-5 12 0M1 1l11 9.500M4.500 6a2.300 2.300 0 1 0 3.500-2" /></Ico>ToolTip</PageTab>
            <PageTab $w={117} $active>Detailed Page</PageTab>
            <AddPage><Ico w={11} c="#fff" sw={2.600}><path d="M5.500 0v11M0 5.500h11" /></Ico></AddPage>
          </PageTabs>
        </Middle>
        <Pane $w={181}>
          <PaneHead><span>Format button</span><Dots /><DoubleChev c="#2b579a" /></PaneHead>
          <PaneSearch><IconSearch c="#605e5c" s={15} />Search</PaneSearch>
          <FormatTabs><FormatTab $active>Button</FormatTab><FormatTab>Properties</FormatTab><FormatTab><Slot $w={15}><Ico w={15} h={22} c="none"><path d="M0 10h2v2H0zM6.500 10h2v2h-2zM13 10h2v2h-2z" fill="#3b3a39" /></Ico></Slot></FormatTab></FormatTabs>
          {['Size and style', 'Title', 'Button style', 'Rotation', 'Action'].map(s => (
            <Section key={s}><Chev c="#323130" /><span>{s}</span>{s === 'Title' && <Toggle>Off</Toggle>}{s === 'Action' && <Toggle $on>On</Toggle>}</Section>
          ))}
        </Pane>
        <Pane $w={182}>
          <PaneHead $pr={9}><span>Data</span><Dots /><DoubleChev /></PaneHead>
          <PaneSearch $data><IconSearch c="#605e5c" s={14} flip />Search</PaneSearch>
          <Tree>
            <TreeRow><Slot $w={16}><Chev down c="#797775" /></Slot><Slot $w={18}><MeasureStackIcon /></Slot>All Measures</TreeRow>
            {measures.map(m => <Field key={m} name={m} icon={<MeasureIcon />} />)}
            <TreeRow><Slot $w={16}><Chev down c="#797775" /></Slot><Slot $w={18}><TableIcon /></Slot>Date Table</TreeRow>
            {fields.map(([n, k]) => <Field key={n} name={n} expand={k === 'd'} icon={k === 'd' ? <DateIcon /> : k === 's' ? <SigmaIcon /> : null} />)}
          </Tree>
          <TreeScroll />
        </Pane>
        <RightRail>
          <RightItem $on><Ico w={15} h={19}><path d="M.7 3.500v12c0 3.500 13.600 3.500 13.600 0v-12c0-3.700-13.600-3.700-13.600 0c0 3.400 13.600 3.400 13.600 0" fill="#fff" /></Ico></RightItem>
          <RightItem><Ico w={19} h={19}><path d="M9 17.500H.7V7h5v10.500V.7h5v6M10.700 4h4v2.500" /><path d="M9.500 9v7.500c0 2 8 2 8 0V9c0-2-8-2-8 0c0 1.800 8 1.800 8 0" fill="#fff" stroke="#e8780c" strokeWidth="1.400" /></Ico></RightItem>
          <RightItem $on><Ico w={19} h={19}><path d="M4 17.500H.7V7h5v8V.7h5v8M10.700 4h4v3" fill="#fff" /><path d="M17.500 6.500L10 15l-2-1.500 8-7.500z" fill="#fff" /><path d="M2 17.500c2 0 2-3.500 4.500-4 2.500 0 3.500 2 2 3.800-1.500 1.500-4.500 1.200-6.500.2z" fill="#2b88d8" stroke="#1664a7" /></Ico></RightItem>
          <RightItem><Ico w={17} c="#111" sw={1.300}><path d="M8.500 0v17M0 8.500h17" /></Ico></RightItem>
          <RightGear><Ico w={20} h={20} sw={1.300}><path d="M8 1h4l.6 2.800 2 1.100 2.700-1 2 3.500-2.100 1.900v1.400l2.100 1.900-2 3.500-2.700-1-2 1.100L12 19H8l-.6-2.800-2-1.100-2.700 1-2-3.500 2.100-1.900V9.300L.7 7.400l2-3.500 2.700 1 2-1.100z" /><circle cx="10" cy="10" r="3" /></Ico></RightGear>
        </RightRail>
      </Workspace>

      <Status>
        Page 3 of 3
        <Zoom>
          <Ico w={4} h={2} c="#484644" sw={2}><path d="M0 1h4" /></Ico>
          <Ico w={100} h={12} c="#605e5c"><path d="M0 6.500h100M50.500 3v7" /><path d="M33.500 1v11" strokeWidth="3.500" /></Ico>
          <Ico w={8} h={8} c="#484644" sw={1.200}><path d="M4 0v8M0 4h8" /></Ico>
          <Pct>70%</Pct>
          <Ico w={16} h={12} c="#605e5c"><path d="M.5.5h15v11H.5zM3 5V3h3M10 3h3v2M13 7.500v2h-3M6 9.500H3v-2" /></Ico>
        </Zoom>
      </Status>
      <Taskbar>
        <Start><Ico w={16} c="none"><path d="M0 2.200L7 1.200v6.300H0zM8 1L16 0v7.500H8zM0 8.500h7v6.300l-7-1zM8 8.500h8V16l-8-1z" fill="#fff" /></Ico></Start>
        <TaskSearch><IconSearch s={17} c="#222" />Type here to search
          <Ico w={62} h={28} c="none"><path d="M24 1c2 8 4 9 12 12-8 3-10 5-12 12-2-7-4-9-12-12 8-3 10-4 12-12z" fill="#fcc21b" /><path d="M46 10c1 4 2 5 6 6-4 1-5 2-6 6-1-4-2-5-6-6 4-1 5-2 6-6z" fill="#fbb92a" /><path d="M5 16l1.500 3.500L10 21l-3 1.500L5.500 26 4 22.500 0 21l3.500-1.500z" fill="#1f9ff0" /><circle cx="40" cy="3" r="2.200" fill="#f2552c" /><circle cx="58" cy="24" r="2.200" fill="#8bc53f" /></Ico>
        </TaskSearch>
        {apps.map((a, i) => <TaskApp key={i} $run={i === 4 || i === 11} $focus={i === 11}>{a}</TaskApp>)}
        <Tray>
          <TrayItem $w={30}><Ico w={24} h={24} c="none"><circle cx="11" cy="13" r="10.500" fill="#f08a1d" /><path d="M10 21c-4-4 2-6 3-4 2-4 7-1 6 1 4 0 3 4 0 4h-7c-1 0-2-.5-2-1z" fill="#b9d4fb" /><circle cx="16" cy="6" r="6.300" fill="#c42b1c" /><BadgeText x="16" y="9" $s={9}>3</BadgeText></Ico></TrayItem>
          <TrayItem $w={55} $wide>19°C</TrayItem>
          <TrayItem $w={24}><Ico w={12} h={8} c="#fff" sw={1.300}><path d="M.7 7L6 1.500 11.300 7" /></Ico></TrayItem>
          <TrayItem $w={22}><Ico w={15} h={9} c="#fff"><path d="M.5.5h12v8H.5zM14 3v3" /><path d="M2 2h9v5H2z" fill="#fff" stroke="none" /></Ico></TrayItem>
          <TrayItem $w={27}><Ico w={17} h={14} c="#fff"><path d="M.5 4.500H3L6.500 1v12L3 9.500H.5zM9 4.500c1 1.500 1 3.500 0 5M11.500 2.500c2 2.500 2 6.500 0 9M14 .5c3 3.500 3 9.500 0 13" /></Ico></TrayItem>
          <TrayItem $w={23}><Ico w={13} h={13} c="#ddd" sw={1.200}><path d="M.7 12.500C1 6 6 1 12.500.7M4 12.500C4 8 8 4 12.500 4M7.300 12.500c0-3 2.200-5.200 5.200-5.200" /><circle cx="11.500" cy="11.500" r="1.200" fill="#fff" /></Ico></TrayItem>
          <TrayItem $w={34}>ENG</TrayItem>
          <TrayItem $w={60} $center>12:39 PM<br />26-08-2025</TrayItem>
          <TrayItem $w={35}><Ico w={24} h={26} c="none" vb="-17 0 24 26"><path d="M0 3h16v14H7l-3 4v-4H0z" fill="#fff" /><path d="M3 7h10M3 10h10M3 13h6" stroke="#222" /><circle cx="15" cy="18" r="7.500" fill="#3c3c3c" stroke="#bbb" /><BadgeText x="15" y="22" $s={11}>3</BadgeText></Ico></TrayItem>
        </Tray>
      </Taskbar>
    </Window>
  );
}
